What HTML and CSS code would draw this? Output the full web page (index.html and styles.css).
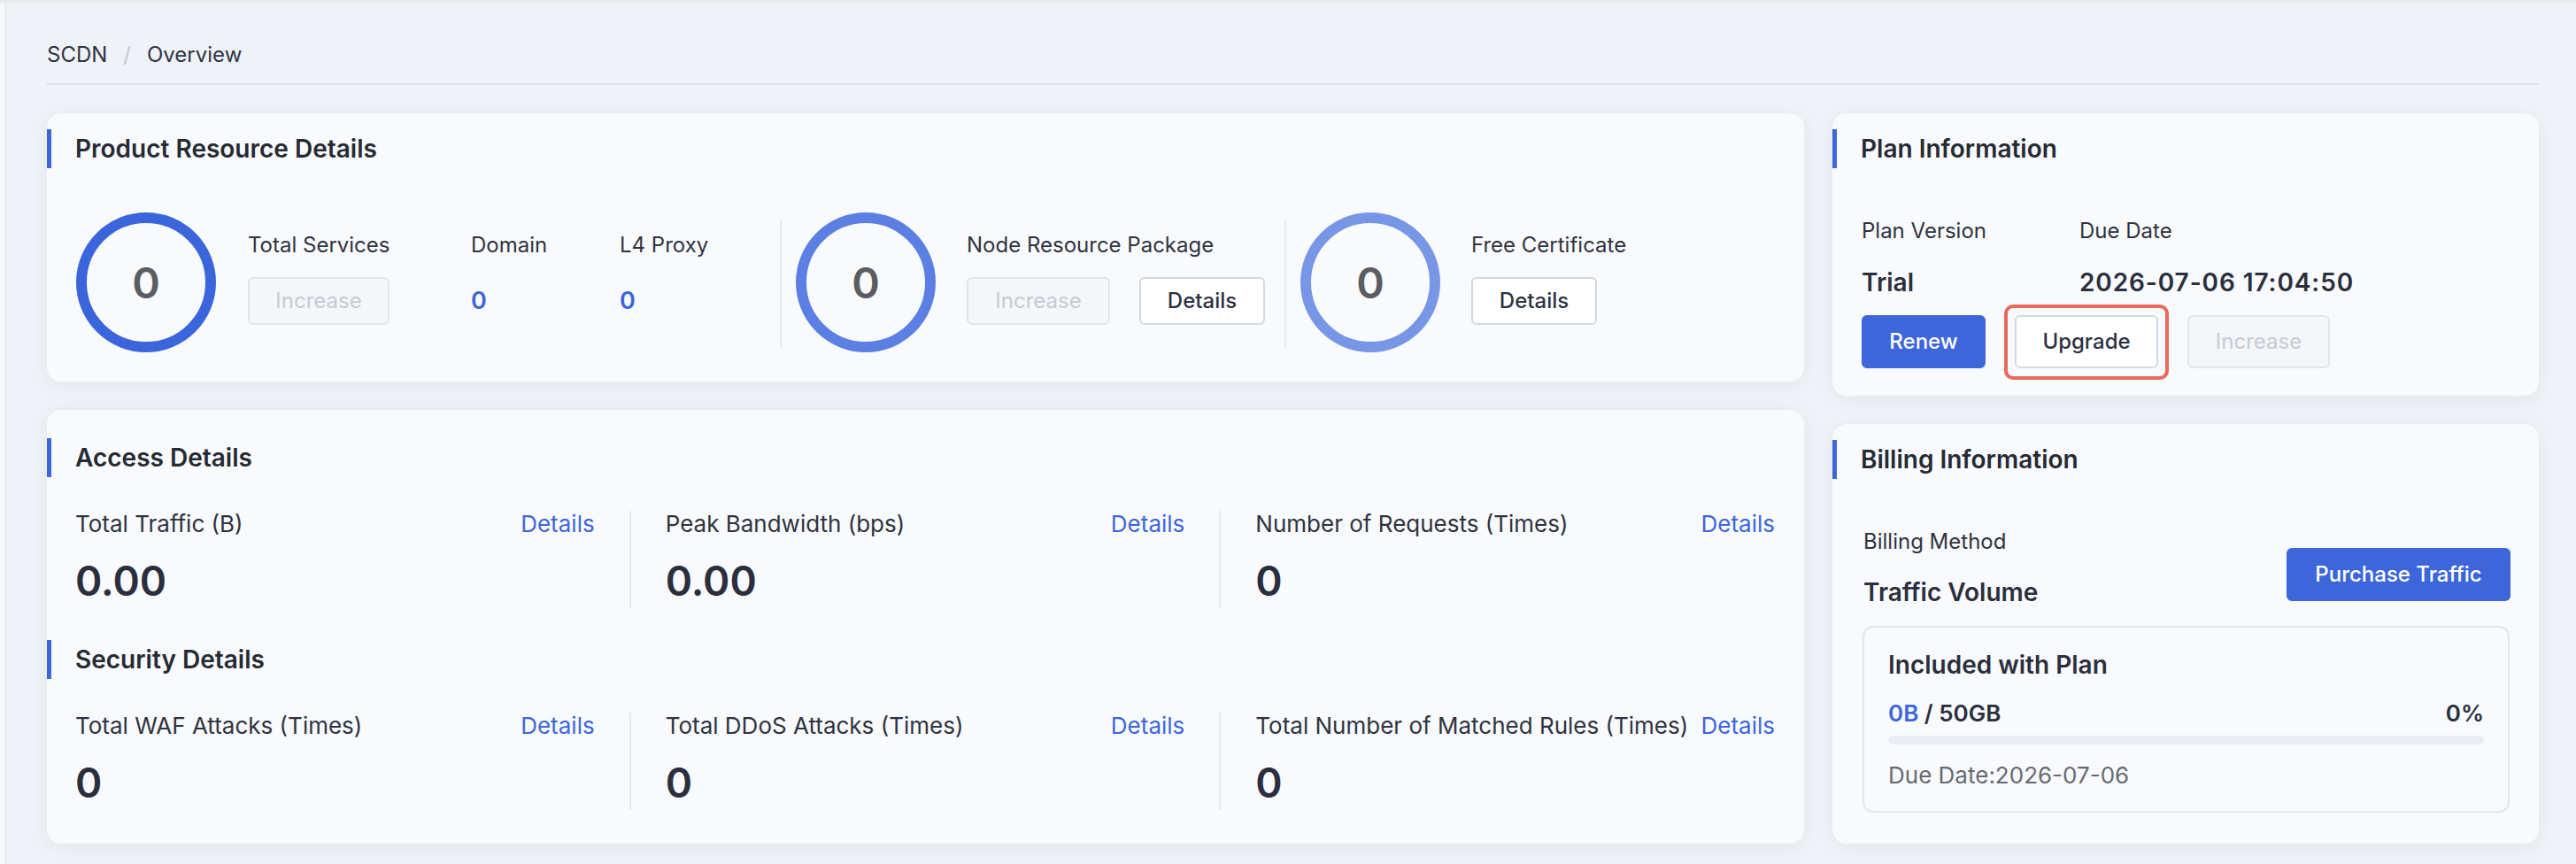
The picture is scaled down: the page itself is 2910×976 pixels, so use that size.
FILE: index.html
```html
<!DOCTYPE html>
<html lang="en">
<head>
<meta charset="utf-8">
<title>SCDN Overview</title>
<link rel="stylesheet" href="styles.css">
</head>
<body>
<div class="app">
  <aside class="rail"></aside>
  <main class="main">
    <nav class="breadcrumb"><span>SCDN</span><span class="sep">/</span><span>Overview</span></nav>
    <div class="grid">
      <div class="col">
        <section class="card card-product">
          <h2 class="card-title">Product Resource Details</h2>
          <div class="product-row">
            <div class="ring ring-1"><span>0</span></div>
            <div class="stat stat-services">
              <div class="stat-label">Total Services</div>
              <button class="btn btn-disabled w-160">Increase</button>
            </div>
            <div class="stat stat-domain">
              <div class="stat-label">Domain</div>
              <div class="stat-value">0</div>
            </div>
            <div class="stat stat-proxy">
              <div class="stat-label">L4 Proxy</div>
              <div class="stat-value">0</div>
            </div>
            <div class="vdiv vdiv-a"></div>
            <div class="ring ring-2"><span>0</span></div>
            <div class="stat">
              <div class="stat-label">Node Resource Package</div>
              <div class="btn-row">
                <button class="btn btn-disabled w-162">Increase</button>
                <button class="btn btn-default w-142">Details</button>
              </div>
            </div>
            <div class="vdiv vdiv-b"></div>
            <div class="ring ring-3"><span>0</span></div>
            <div class="stat">
              <div class="stat-label">Free Certificate</div>
              <button class="btn btn-default w-142">Details</button>
            </div>
          </div>
        </section>
        <section class="card card-access">
          <h2 class="card-title">Access Details</h2>
          <div class="metrics">
            <div class="metric">
              <div class="metric-head"><span>Total Traffic (B)</span><a class="link">Details</a></div>
              <div class="metric-value">0.00</div>
            </div>
            <div class="mdiv"></div>
            <div class="metric">
              <div class="metric-head"><span>Peak Bandwidth (bps)</span><a class="link">Details</a></div>
              <div class="metric-value">0.00</div>
            </div>
            <div class="mdiv"></div>
            <div class="metric">
              <div class="metric-head"><span>Number of Requests (Times)</span><a class="link">Details</a></div>
              <div class="metric-value">0</div>
            </div>
          </div>
          <h2 class="card-title title-security">Security Details</h2>
          <div class="metrics">
            <div class="metric">
              <div class="metric-head"><span>Total WAF Attacks (Times)</span><a class="link">Details</a></div>
              <div class="metric-value">0</div>
            </div>
            <div class="mdiv"></div>
            <div class="metric">
              <div class="metric-head"><span>Total DDoS Attacks (Times)</span><a class="link">Details</a></div>
              <div class="metric-value">0</div>
            </div>
            <div class="mdiv"></div>
            <div class="metric">
              <div class="metric-head"><span>Total Number of Matched Rules (Times)</span><a class="link">Details</a></div>
              <div class="metric-value">0</div>
            </div>
          </div>
        </section>
      </div>
      <div class="col">
        <section class="card card-plan">
          <h2 class="card-title">Plan Information</h2>
          <div class="plan-grid">
            <div class="plan-label">Plan Version</div>
            <div class="plan-label">Due Date</div>
            <div class="plan-value">Trial</div>
            <div class="plan-value plan-date">2026-07-06 17:04:50</div>
          </div>
          <div class="plan-actions">
            <button class="btn btn-primary btn-lg w-140">Renew</button>
            <button class="btn btn-default btn-lg btn-highlight w-162">Upgrade</button>
            <button class="btn btn-disabled btn-lg w-161">Increase</button>
          </div>
        </section>
        <section class="card card-billing">
          <h2 class="card-title">Billing Information</h2>
          <div class="billing-head">
            <div>
              <div class="plan-label">Billing Method</div>
              <div class="plan-value">Traffic Volume</div>
            </div>
            <button class="btn btn-primary btn-lg btn-purchase">Purchase Traffic</button>
          </div>
          <div class="package">
            <div class="package-title">Included with Plan</div>
            <div class="package-usage"><span><span class="used">0B</span> / 50GB</span><span>0%</span></div>
            <div class="progress"><div class="progress-fill" style="width:0%"></div></div>
            <div class="package-due">Due Date:2026-07-06</div>
          </div>
        </section>
      </div>
    </div>
  </main>
</div>
</body>
</html>
```
FILE: styles.css
```css
* { box-sizing: border-box; }
html, body { margin: 0; padding: 0; height: 100%; }
body {
  font-family: Inter, "Noto Sans", "Liberation Sans", sans-serif;
  color: #2c303d;
  background: #eff2f6;
  font-size: 24px;
}
.app {
  display: flex;
  height: 976px;
  border-top: 3px solid #e8eaed;
}
.rail {
  width: 7px;
  flex: none;
  background: #f7f8fa;
  border-right: 1px solid #e1e4e8;
}
.main {
  flex: 1;
  display: flex;
  flex-direction: column;
  padding: 0 42px 23px 46px;
}
.breadcrumb {
  display: flex;
  align-items: center;
  height: 32px;
  margin-top: 43px;
  padding-bottom: 16px;
  box-sizing: content-box;
  border-bottom: 2px solid #dfe3e8;
  font-size: 24px;
  line-height: 32px;
  color: #2e3344;
}
.breadcrumb .sep { color: #c3c8d0; margin: 0 18px; }
.grid {
  flex: 1;
  display: grid;
  grid-template-columns: 1fr 798px;
  gap: 32px;
  margin-top: 32px;
}
.col {
  display: flex;
  flex-direction: column;
  gap: 32px;
}
.card {
  background: #f8fafd;
  border-radius: 16px;
  box-shadow: 0 4px 26px rgba(30, 45, 70, 0.06);
}
.card-title {
  margin: 0;
  border-left: 5px solid #3d66db;
  padding-left: 27px;
  height: 44px;
  line-height: 44px;
  font-size: 28px;
  font-weight: 600;
  color: #262a33;
}
.card-product { padding: 18px 0 33px; }
.card-access { padding: 32px 0 37px; flex: 1; }
.card-plan { padding: 18px 0 31px; }
.card-billing { padding: 18px 0 33px; flex: 1; }

/* product row */
.product-row {
  display: flex;
  align-items: flex-start;
  padding: 0 32px 0 33px;
  margin-top: 50px;
}
.ring {
  width: 158px;
  height: 158px;
  flex: none;
  border-radius: 50%;
  border: 12px solid #3b66db;
  display: flex;
  align-items: center;
  justify-content: center;
  font-size: 48px;
  font-weight: 600;
  color: #5c5d63;
  margin-right: 36px;
}
.ring-2 { border-color: #5b7fe2; margin-right: 35px; }
.ring-3 { border-color: #7896e6; margin-right: 35px; }
.stat { margin-top: 21px; flex: none; }
.stat-label { font-size: 24px; line-height: 32px; color: #2f3340; white-space: nowrap; }
.stat .btn { margin-top: 20px; }
.stat-services { width: 160px; margin-right: 92px; }
.stat-domain { width: 168px; }
.stat-proxy { width: 181px; }
.stat-value {
  margin-top: 31px;
  font-size: 27px;
  line-height: 32px;
  font-weight: 600;
  color: #3d66db;
}
.btn-row { display: flex; gap: 33px; }
.vdiv {
  width: 2px;
  height: 144px;
  margin-top: 8px;
  background: #e6e9ed;
  flex: none;
}
.vdiv-a { margin-right: 16px; }
.vdiv-b { margin-left: 22px; margin-right: 16px; }

/* buttons */
.btn {
  font-family: inherit;
  font-size: 24px;
  font-weight: 500;
  height: 54px;
  padding: 0;
  border-radius: 6px;
  border: 2px solid #d4d9e0;
  background: #fff;
  color: #2c3142;
  cursor: pointer;
  line-height: 1;
  text-align: center;
}
.w-140 { width: 140px; }
.w-142 { width: 142px; }
.w-160 { width: 160px; }
.w-161 { width: 161px; }
.w-162 { width: 162px; }
.btn-disabled {
  background: #f4f6f9;
  border-color: #e2e5ea;
  color: #c5cbd4;
  font-weight: 400;
  cursor: not-allowed;
}
.btn-primary {
  background: #3d66db;
  border-color: #3d66db;
  color: #fff;
}
.btn-lg { height: 60px; }
.btn-highlight { position: relative; }
.btn-highlight::after {
  content: "";
  position: absolute;
  inset: -14px -14px -15px;
  border: 4px solid #e9695a;
  border-radius: 10px;
  pointer-events: none;
}

/* metrics */
.metrics {
  display: flex;
  padding: 0 33px 0 32px;
  margin-top: 38px;
}
.metric { flex: 1; min-width: 0; }
.metric-head {
  display: flex;
  justify-content: space-between;
  font-size: 26px;
  line-height: 30px;
  color: #2f3340;
  white-space: nowrap;
}
.link { color: #3d66db; cursor: pointer; }
.metric-value {
  margin-top: 21px;
  font-size: 46px;
  line-height: 56px;
  font-weight: 600;
  color: #2b2f3d;
}
.mdiv {
  width: 2px;
  background: #e6e9ed;
  margin: 0 39px;
  height: 110px;
  flex: none;
}
.title-security { margin-top: 36px; }

/* plan */
.plan-grid {
  display: grid;
  grid-template-columns: 246px 1fr;
  row-gap: 22px;
  padding: 0 33px;
  margin-top: 55px;
}
.plan-label { font-size: 24px; line-height: 32px; color: #2f3340; }
.plan-value {
  font-size: 28px;
  line-height: 40px;
  font-weight: 600;
  color: #2b2f3d;
}
.plan-date { letter-spacing: 0.9px; }
.plan-actions {
  display: flex;
  gap: 33px;
  padding: 0 33px;
  margin-top: 17px;
}

/* billing */
.billing-head {
  display: flex;
  justify-content: space-between;
  align-items: flex-end;
  padding: 0 32px 0 35px;
  margin-top: 55px;
}
.billing-head .plan-value { margin-top: 21px; }
.btn-purchase { margin-bottom: 10px; width: 253px; }
.package {
  margin: 18px 33px 0 34px;
  border: 2px solid #e3e6eb;
  border-radius: 12px;
  padding: 24px 27px 24px;
}
.package-title {
  font-size: 28px;
  line-height: 36px;
  font-weight: 600;
  color: #2b2f3d;
}
.package-usage {
  display: flex;
  justify-content: space-between;
  margin-top: 21px;
  font-size: 26px;
  line-height: 32px;
  font-weight: 600;
  color: #2b2f3d;
}
.used { color: #3d66db; }
.progress {
  margin-top: 9px;
  height: 10px;
  border-radius: 5px;
  background: #e9edf3;
  overflow: hidden;
}
.progress-fill { height: 100%; background: #3d66db; }
.package-due {
  margin-top: 19px;
  font-size: 26px;
  line-height: 32px;
  color: #666a73;
}
```
